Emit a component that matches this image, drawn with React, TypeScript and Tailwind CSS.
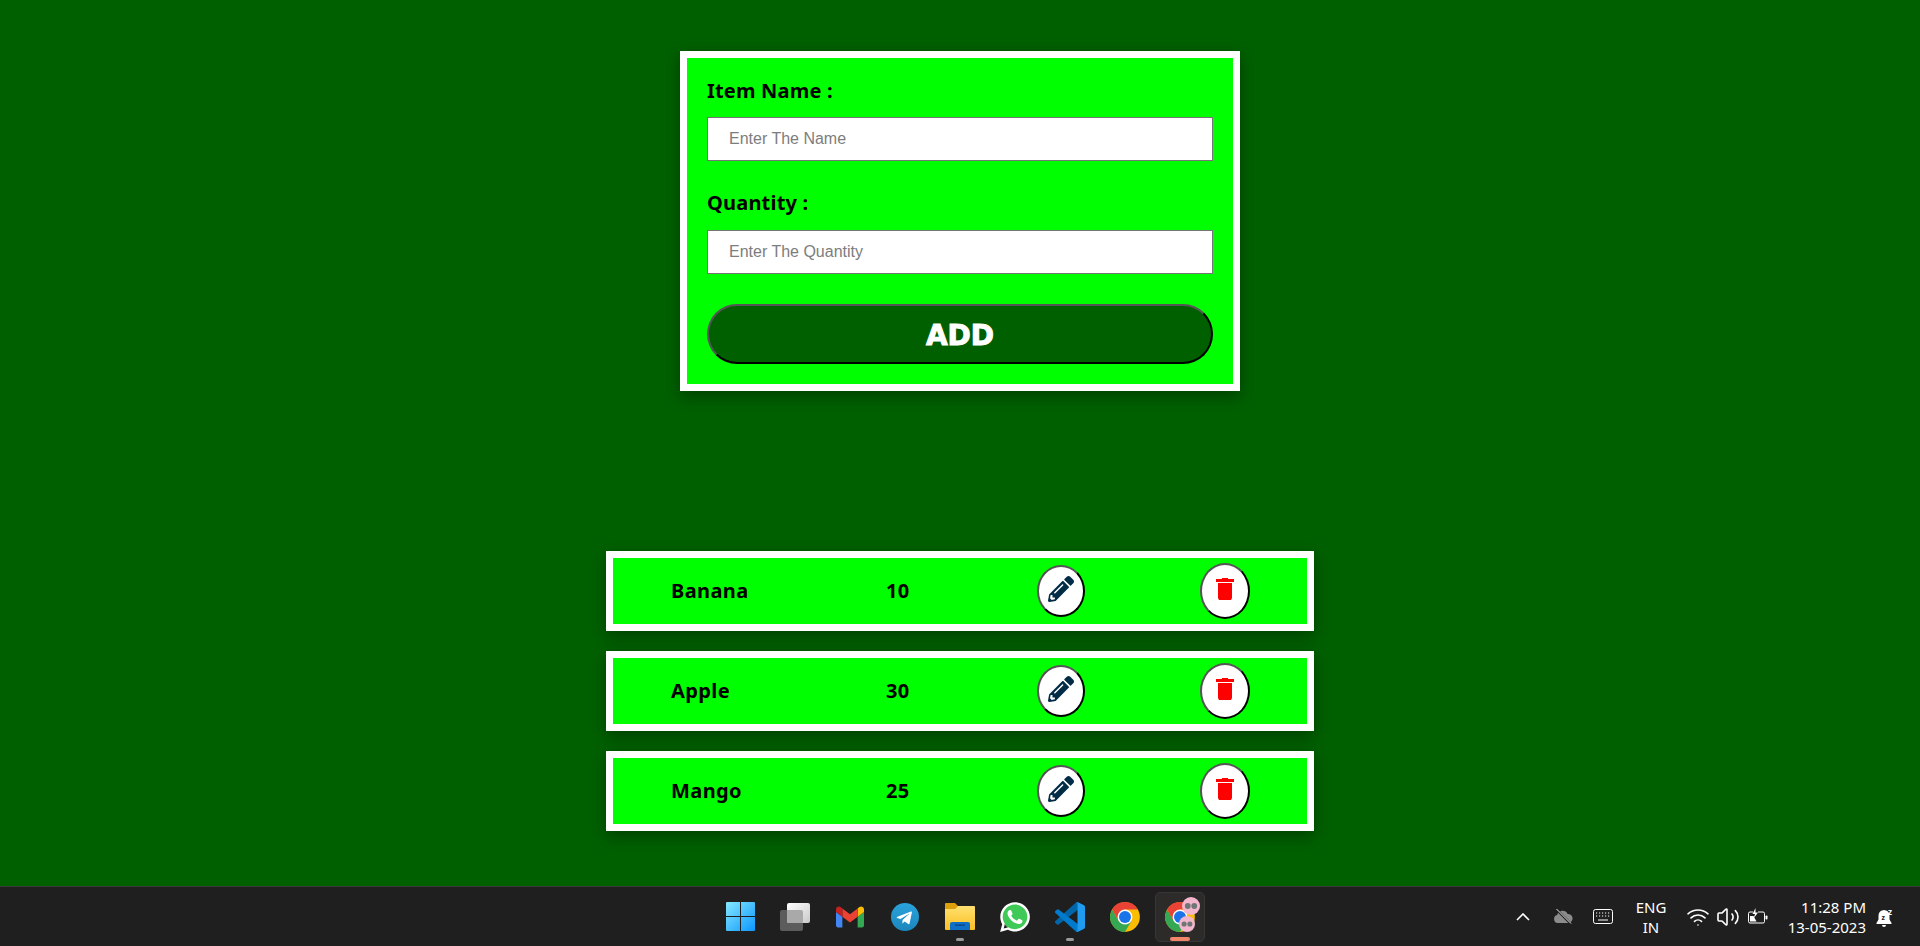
import { FaPencilAlt, FaWhatsapp } from "react-icons/fa";
import { Volume2, Wifi } from "lucide-react";

const items = [
  { name: "Banana", qty: "10" },
  { name: "Apple", qty: "30" },
  { name: "Mango", qty: "25" },
];

const Field = ({ label, placeholder, className }: { label: string; placeholder: string; className: string }) => (
  <div className="flex flex-col">
    <label className={`${className} text-[20px] leading-[32px] font-bold tracking-[0.2px] text-black font-['Noto_Sans',sans-serif]`}>
      {label}
    </label>
    <input
      placeholder={placeholder}
      className="h-[44px] w-full border border-[#767676] bg-white pl-[21px] text-[16px] font-['Liberation_Sans',sans-serif] placeholder:text-[#7d7d7d]"
    />
  </div>
);

const TrashIcon = () => (
  <svg width="18" height="22" viewBox="0 0 18 22" fill="#ff0000">
    <path d="M6 0h6v1h6v3H0V1h6z" />
    <path d="M2 5h14v15l-1 2H3l-1-2z" />
  </svg>
);

const Row = ({ name, qty }: { name: string; qty: string }) => (
  <div className="flex h-[80px] w-[708px] items-center border-[7px] border-white bg-[#00ff00] shadow-[0_5px_15px_rgba(0,0,0,0.35)]">
    <span className="ml-[58px] w-[215px] text-[20px] font-bold tracking-[0.4px] text-black font-['Noto_Sans',sans-serif]">{name}</span>
    <span className="w-[151px] text-[20px] font-bold tracking-[0.4px] text-black font-['Noto_Sans',sans-serif]">{qty}</span>
    <button className="flex h-[52px] w-[48px] items-center justify-center rounded-[50%] border-2 border-t-[#555] border-l-[#555] border-r-black border-b-black bg-white pb-[4px]">
      <FaPencilAlt className="h-[26px] w-[26px] text-[#022b45]" />
    </button>
    <button className="ml-[115px] flex h-[56px] w-[50px] items-center justify-center rounded-[50%] border-2 border-t-[#555] border-l-[#555] border-r-black border-b-black bg-white pb-[5px]">
      <TrashIcon />
    </button>
  </div>
);

const WindowsIcon = () => (
  <svg width="29" height="29" viewBox="0 0 29 29">
    <defs>
      <linearGradient id="win" x1="0" y1="0" x2="29" y2="29" gradientUnits="userSpaceOnUse">
        <stop offset="0" stopColor="#86e8ff" />
        <stop offset="1" stopColor="#0b97ff" />
      </linearGradient>
    </defs>
    <path fill="url(#win)" d="M1 0h13v14H0V1a1 1 0 0 1 1-1zM15 0h13a1 1 0 0 1 1 1v13H15zM0 15h14v14H1a1 1 0 0 1-1-1zM15 15h14v13a1 1 0 0 1-1 1H15z" />
  </svg>
);

const TaskViewIcon = () => (
  <svg width="30" height="28" viewBox="0 0 30 28">
    <defs>
      <linearGradient id="tv" x1="0" y1="0" x2="1" y2="1">
        <stop offset="0" stopColor="#ffffff" />
        <stop offset="1" stopColor="#c9c9c9" />
      </linearGradient>
    </defs>
    <rect x="0" y="7" width="23" height="21" rx="2" fill="#5c5c5c" />
    <rect x="7" y="0" width="23" height="20" rx="2" fill="url(#tv)" />
    <path d="M7 7h14a2 2 0 0 1 2 2v11H9a2 2 0 0 1-2-2z" fill="#a9a9a9" />
  </svg>
);

const GmailIcon = () => (
  <svg width="28" height="22" viewBox="52 42 88 66">
    <path fill="#4285f4" d="M58 108h14V74L52 59v43c0 3.32 2.69 6 6 6" />
    <path fill="#34a853" d="M120 108h14c3.32 0 6-2.69 6-6V59l-20 15" />
    <path fill="#fbbc04" d="M120 48v26l20-15v-8c0-7.42-8.47-11.65-14.4-7.2" />
    <path fill="#ea4335" d="M72 74V48l24 18 24-18v26L96 92" />
    <path fill="#c5221f" d="M52 51v8l20 15V48l-5.6-4.2c-5.94-4.45-14.4-.22-14.4 7.2" />
  </svg>
);

const TelegramIcon = () => (
  <svg width="28" height="28" viewBox="0 0 24 24">
    <defs>
      <linearGradient id="tg" x1="0" y1="0" x2="0" y2="1">
        <stop offset="0" stopColor="#2aa3dc" />
        <stop offset="1" stopColor="#1c86bd" />
      </linearGradient>
    </defs>
    <circle cx="12" cy="12" r="12" fill="url(#tg)" />
    <path fill="#ffffff" d="M5.5 11.8l11.6-4.5c.5-.2 1 .1.8.9l-2 9.3c-.1.7-.5.8-1.1.5l-3-2.2-1.5 1.4c-.2.2-.3.3-.6.3l.2-3 5.6-5c.2-.2 0-.3-.4-.1l-6.9 4.3-3-.9c-.6-.2-.6-.6.3-.9z" />
  </svg>
);

const FolderIcon = () => (
  <svg width="30" height="27" viewBox="0 0 30 27">
    <defs>
      <linearGradient id="fd" x1="0" y1="0" x2="0" y2="1">
        <stop offset="0" stopColor="#ffe070" />
        <stop offset="1" stopColor="#fbbf24" />
      </linearGradient>
    </defs>
    <path fill="#dd9f0b" d="M1 0h9l3 3h16v6H0V1a1 1 0 0 1 1-1z" />
    <path fill="url(#fd)" d="M0 6l10 0 3-3h16a1 1 0 0 1 1 1v22a1 1 0 0 1-1 1H1a1 1 0 0 1-1-1z" />
    <path fill="#0f6fc6" d="M5 21a2 2 0 0 1 2-2h16a2 2 0 0 1 2 2v6H5z" />
    <rect x="10" y="21.5" width="10" height="1.2" fill="#083e78" />
  </svg>
);

const VsCodeIcon = () => (
  <svg width="30" height="30" viewBox="0 0 100 100">
    <path fill="#0065a9" d="M96.5 10.8 75.9.9a6.2 6.2 0 0 0-7.1 1.2L1.4 63.6a4.2 4.2 0 0 0 0 6.2l5.5 5a4.2 4.2 0 0 0 5.3.2L93.4 13.4c2.7-2.1 6.6-.1 6.6 3.3v-.2a6.2 6.2 0 0 0-3.5-5.7z" />
    <path fill="#007acc" d="m96.5 89.2-20.6 9.9a6.2 6.2 0 0 1-7.1-1.2L1.4 36.4a4.2 4.2 0 0 1 0-6.2l5.5-5a4.2 4.2 0 0 1 5.3-.2l81.2 61.6c2.7 2.1 6.6.1 6.6-3.3v.2a6.2 6.2 0 0 1-3.5 5.7z" />
    <path fill="#1f9cf0" d="M75.9 99.1a6.2 6.2 0 0 1-7.1-1.2c2.3 2.3 6.2.7 6.2-2.6V4.7c0-3.3-3.9-4.9-6.2-2.6a6.2 6.2 0 0 1 7.1-1.2l20.6 9.9A6.2 6.2 0 0 1 100 16.4v67.2a6.2 6.2 0 0 1-3.5 5.6z" />
  </svg>
);

const ChromeShape = () => (
  <>
    <circle cx="24" cy="24" r="21" fill="#fbbc04" />
    <path fill="#34a853" d="M5.81 13.5L14.91 29.25 24 24l9.09 5.25L24 45A21 21 0 0 1 5.81 13.5z" />
    <path fill="#ea4335" d="M5.81 13.5A21 21 0 0 1 42.19 13.5H24V24l-9.09 5.25z" />
    <circle cx="24" cy="24" r="10.5" fill="#ffffff" />
    <circle cx="24" cy="24" r="8.5" fill="#1a73e8" />
  </>
);

const ChromeIcon = () => (
  <svg width="34" height="34" viewBox="0 0 48 48">
    <ChromeShape />
  </svg>
);

const Avatar = ({ cx, cy, r }: { cx: number; cy: number; r: number }) => (
  <g>
    <circle cx={cx} cy={cy} r={r} fill="#f3b6cd" />
    <circle cx={cx - r * 0.36} cy={cy} r={r * 0.32} fill="#6e7775" />
    <circle cx={cx + r * 0.36} cy={cy} r={r * 0.32} fill="#6e7775" />
  </g>
);

const ChromeProfileIcon = () => (
  <svg width="40" height="40" viewBox="0 0 40 40" className="overflow-visible">
    <svg x="3" y="3" width="34" height="34" viewBox="0 0 48 48">
      <ChromeShape />
    </svg>
    <Avatar cx={31} cy={9} r={9} />
    <Avatar cx={27} cy={27} r={8} />
  </svg>
);

const dock = [
  { key: "start", icon: <WindowsIcon /> },
  { key: "taskview", icon: <TaskViewIcon /> },
  { key: "gmail", icon: <GmailIcon /> },
  { key: "telegram", icon: <TelegramIcon /> },
  { key: "files", icon: <FolderIcon />, open: true },
  {
    key: "whatsapp",
    icon: (
      <span className="relative flex h-[34px] w-[34px] items-center justify-center">
        <span className="h-[27px] w-[27px] rounded-full bg-[#3fc956]" />
        <FaWhatsapp className="absolute inset-0 h-[34px] w-[34px] text-white" />
      </span>
    ),
  },
  { key: "vscode", icon: <VsCodeIcon />, open: true },
  { key: "chrome", icon: <ChromeIcon /> },
];

const CloudOffIcon = () => (
  <svg width="20" height="15" viewBox="0 0 20 15">
    <path fill="#8c8c8c" d="M5 14a4 4 0 0 1-.8-7.9A5.5 5.5 0 0 1 14.6 5 4.5 4.5 0 0 1 15.5 14z" />
    <path d="M3.5 0.5L17.5 14.5" stroke="#1f1f1f" strokeWidth="2.4" />
    <path d="M3.5 0L18 14.5" stroke="#e8e8e8" strokeWidth="1" />
  </svg>
);

const KeyboardIcon = () => (
  <svg width="20" height="15" viewBox="0 0 20 15" fill="none">
    <rect x="0.5" y="0.5" width="19" height="14" rx="2" stroke="#ffffff" />
    <path d="M3 4h1.2M6 4h1.2M9 4h1.2M12 4h1.2M15 4h1.2M3 7h1.2M6 7h1.2M9 7h1.2M12 7h1.2M15 7h1.2M5 11h10" stroke="#ffffff" />
  </svg>
);

const BatteryIcon = () => (
  <svg width="20" height="17" viewBox="0 0 20 17" fill="none">
    <path d="M5 4H2a1.5 1.5 0 0 0-1.5 1.5v8A1.5 1.5 0 0 0 2 15h13a1.5 1.5 0 0 0 1.5-1.5v-8A1.5 1.5 0 0 0 15 4h-5" stroke="#ffffff" />
    <rect x="17.5" y="7.5" width="2" height="4" rx="0.8" fill="#ffffff" />
    <path d="M2 13.5V8h3.5l3 5.5z" fill="#ffffff" />
    <path d="M7.5 0L4.5 6h2.5L5.5 10.5 10 4.5H7.5z" fill="#ffffff" />
  </svg>
);

const BellIcon = () => (
  <svg width="20" height="22" viewBox="0 0 20 22">
    <path fill="#ffffff" d="M8 4A5.5 5.5 0 0 0 2.5 9.5v4L.5 17v1h15v-1l-2-3.5v-4A5.5 5.5 0 0 0 8 4zM6 19a2 2 0 0 0 4 0z" />
    <text x="5.5" y="14" fontSize="7" fontWeight="700" fill="#1f1f1f" fontFamily="'Noto Sans', sans-serif">z</text>
    <text x="12" y="9" fontSize="8" fontWeight="700" fill="#ffffff" fontFamily="'Noto Sans', sans-serif">z</text>
  </svg>
);

export default function App() {
  return (
    <div className="flex h-[946px] flex-col bg-[#006000]">
      <main className="flex flex-1 flex-col items-center pt-[51px]">
        <form className="h-[340px] w-[560px] border-[7px] border-white bg-[#00ff00] px-[20px] shadow-[0_5px_15px_rgba(0,0,0,0.35)]">
          <Field className="h-[59px] pt-[17px]" label="Item Name :" placeholder="Enter The Name" />
          <div className="mt-[10px]">
            <Field className="h-[59px] pt-[16px]" label="Quantity :" placeholder="Enter The Quantity" />
          </div>
          <button
            type="button"
            className="mt-[30px] h-[60px] w-full rounded-[30px] border-2 border-t-[#555] border-l-[#555] border-r-black border-b-black bg-[#006000] pt-[3px] text-[28px] font-bold text-white [-webkit-text-stroke:1px_white] font-['DejaVu_Sans',sans-serif]"
          >
            ADD
          </button>
        </form>
        <div className="mt-[160px] flex flex-col gap-[20px]">
          {items.map((item) => (
            <Row key={item.name} name={item.name} qty={item.qty} />
          ))}
        </div>
      </main>
      <footer className="grid h-[60px] grid-cols-[1fr_auto_1fr] items-center border-t border-[#3a3a3a] bg-[#1f1f1f] text-white font-['Noto_Sans',sans-serif]">
        <div />
        <div className="flex items-center gap-[5px]">
          {dock.map((d) => (
            <div key={d.key} className="relative flex h-[50px] w-[50px] items-center justify-center">
              {d.icon}
              {d.open && <span className="absolute bottom-[1px] left-[21px] h-[3px] w-[8px] rounded-full bg-[#9a9a9a]" />}
            </div>
          ))}
          <div className="relative flex h-[50px] w-[50px] items-center justify-center rounded-[5px] border border-[#363636] bg-[#2d2b2a]">
            <ChromeProfileIcon />
            <span className="absolute bottom-[0px] left-[14px] h-[4px] w-[20px] rounded-full bg-[#f0866a]" />
          </div>
        </div>
        <div className="flex items-center justify-end pr-[24px]">
          <svg width="14" height="8" viewBox="0 0 14 8" fill="none">
            <path d="M1 7l6-6 6 6" stroke="#ffffff" strokeWidth="1.6" />
          </svg>
          <span className="ml-[23px] flex"><CloudOffIcon /></span>
          <span className="ml-[20px] flex"><KeyboardIcon /></span>
          <div className="ml-[18px] w-[40px] text-center text-[15px] leading-[20px]">
            <div>ENG</div>
            <div>IN</div>
          </div>
          <Wifi className="ml-[15px] h-[24px] w-[24px]" strokeWidth={1.6} />
          <Volume2 className="ml-[6px] h-[24px] w-[24px]" strokeWidth={1.6} />
          <span className="ml-[8px] flex"><BatteryIcon /></span>
          <div className="ml-[18px] w-[80px] text-right text-[15px] leading-[20px]">
            <div>11:28 PM</div>
            <div>13-05-2023</div>
          </div>
          <span className="ml-[10px] flex"><BellIcon /></span>
        </div>
      </footer>
    </div>
  );
}
